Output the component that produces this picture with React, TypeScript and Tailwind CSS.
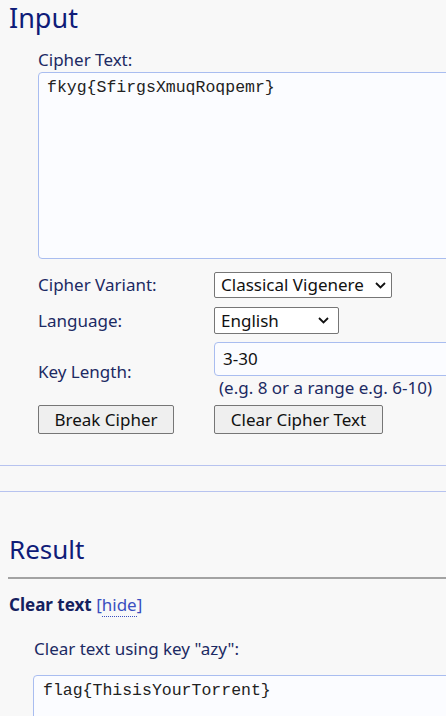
import React from "react";

export default function App() {
  return (
    <div className="h-[716px] w-[446px] overflow-hidden bg-[#f8f8f8] font-['Noto_Sans',sans-serif] text-[17px] text-[#1c2a63]">
      <h2 className="pl-[9px] pt-[1px] text-[27px] leading-[34px] text-[#0f1c78]">Input</h2>
      <div className="pl-[38px]">
        <div className="mt-[15px] leading-[20px]">Cipher Text:</div>
        <textarea
          className="mt-[2px] block h-[187px] w-[430px] resize-none rounded-[4px] border border-[#a9bdf0] bg-[#fbfcff] px-[8px] py-[5px] font-['Liberation_Mono',monospace] text-[16.5px] leading-[19px] text-[#222] outline-none"
          defaultValue="fkyg{SfirgsXmuqRoqpemr}"
        />
        <div className="mt-[13px] flex items-center leading-[22px]">
          <div className="w-[176px] shrink-0">Cipher Variant:</div>
          <div className="flex h-[26px] w-[178px] shrink-0 items-center justify-between rounded-[2px] border border-[#767676] bg-white pl-[6px] pr-[5px] text-[#111]">
            <span>Classical Vigenere</span>
            <Chevron />
          </div>
        </div>
        <div className="mt-[9px] flex items-center leading-[22px]">
          <div className="w-[176px] shrink-0">Language:</div>
          <div className="flex h-[27px] w-[125px] shrink-0 items-center justify-between rounded-[2px] border border-[#767676] bg-white pl-[6px] pr-[9px] text-[#111]">
            <span>English</span>
            <Chevron />
          </div>
        </div>
        <div className="mt-[8px] flex items-center leading-[22px]">
          <div className="w-[176px] shrink-0 pt-[2px]">Key Length:</div>
          <div className="shrink-0">
            <div className="flex h-[34px] w-[240px] items-center rounded-[4px] border border-[#a9bdf0] bg-[#fbfcff] pl-[8px] text-[#111]">
              3-30
            </div>
            <div className="mt-[1px] pl-[5px] leading-[22px]">(e.g. 8 or a range e.g. 6-10)</div>
          </div>
        </div>
        <div className="mt-[6px] flex leading-[22px]">
          <div className="w-[176px] shrink-0">
            <button className="h-[29px] w-[136px] rounded-[2px] border border-[#767676] bg-[#efefef] text-[#111]">
              Break Cipher
            </button>
          </div>
          <button className="h-[29px] w-[169px] shrink-0 rounded-[2px] border border-[#767676] bg-[#efefef] text-[#111]">
            Clear Cipher Text
          </button>
        </div>
      </div>
      <div className="mt-[31px] border-t border-[#b7c3ef]" />
      <div className="mt-[25px] border-t border-[#b7c3ef]" />
      <h2 className="mt-[40px] pl-[9px] text-[26px] leading-[34px] text-[#0f1c78]">Result</h2>
      <div className="ml-[8px] mt-[11px] border-t-2 border-[#a3a3a3]" />
      <div className="mt-[15px] pl-[9px] leading-[22px]">
        <span className="font-bold text-[#14205e]">Clear text</span>{" "}
        <span className="text-[#3b4fc0]">
          [<span className="border-b border-dotted border-[#3b4fc0]">hide</span>]
        </span>
      </div>
      <div className="mt-[22px] pl-[34px] leading-[22px]">Clear text using key "azy":</div>
      <div className="pl-[33px]">
        <textarea
          className="mt-[15px] block h-[80px] w-[430px] resize-none rounded-[4px] border border-[#a9bdf0] bg-[#fbfcff] px-[9px] py-[5px] font-['Liberation_Mono',monospace] text-[16.5px] leading-[19px] text-[#222] outline-none"
          defaultValue="flag{ThisisYourTorrent}"
        />
      </div>
    </div>
  );
}

function Chevron() {
  return (
    <svg width="11" height="7" viewBox="0 0 11 7" fill="none">
      <path d="M1 1l4.5 4.5L10 1" stroke="#111" strokeWidth="1.8" />
    </svg>
  );
}
